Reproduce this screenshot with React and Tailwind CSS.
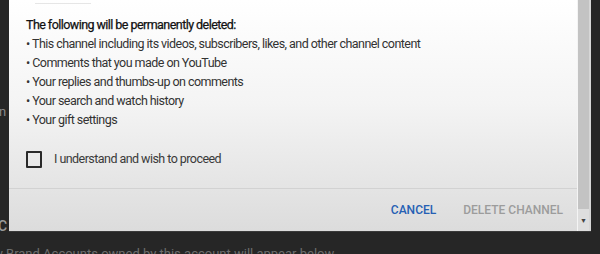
import React from 'react';

const ITEMS = [
  'This channel including its videos, subscribers, likes, and other channel content',
  'Comments that you made on YouTube',
  'Your replies and thumbs-up on comments',
  'Your search and watch history',
  'Your gift settings',
];

function Scrollbar() {
  return (
    <div className="w-[14px] flex flex-col border-l border-[#f4f4f4] border-r-2 border-r-[#d6d6d6] bg-[#dedede]">
      <div className="h-[209px] bg-[#c3c3c3]" />
      <div className="flex-1 flex items-center justify-center text-[7px] leading-none text-[#444] pt-[2px]">▼</div>
    </div>
  );
}

export default function App() {
  return (
    <div
      className="relative w-[600px] h-[254px] overflow-hidden bg-[#262626]"
      style={{ fontFamily: 'Roboto, "Liberation Sans", sans-serif' }}
    >
      {/* page behind the dialog, mostly hidden */}
      <div className="absolute left-[-8px] top-[102px] text-[13px] text-[#8a8a8a]">an</div>
      <div className="absolute left-[-6px] top-[216px] text-[14px] font-medium text-[#9a9a9a]">IC</div>
      <div className="absolute left-[-19px] top-[244px] text-[13px] text-[#6d6d6d] whitespace-nowrap">
        Any Brand Accounts owned by this account will appear below
      </div>

      {/* dialog */}
      <div className="absolute left-[9px] top-0 w-[582px] h-[232px] flex border-b border-[#3a3a3a] bg-gradient-to-b from-white via-[#f4f4f4] via-45% to-[#dcdcdc]">
        <div className="flex-1 flex flex-col">
          <div className="ml-[26px] mt-[3px] h-px w-[56px] bg-[#e6e6e6]" />
          <div className="pl-[17px] pt-[11px] text-[12.5px] leading-[19px] tracking-[-0.55px] text-[#333]">
            <div className="text-[#111] [-webkit-text-stroke:0.25px_#111]">The following will be permanently deleted:</div>
            {ITEMS.map((t) => (
              <div key={t}>• {t}</div>
            ))}
          </div>

          <label className="flex items-center gap-[12px] pl-[17px] mt-[21px]">
            <span className="w-[16px] h-[17px] border-2 border-[#2a2a2a] rounded-[1px]" />
            <span className="text-[12.5px] tracking-[-0.55px] text-[#3a3a3a]">I understand and wish to proceed</span>
          </label>

          <div className="mt-[19px] h-px bg-[#d2d2d2]" />

          <div className="flex-1 flex items-center justify-end gap-[27px] pr-[14px] pt-[1px] text-[12px] font-medium">
            <button className="text-[#2660b4]">CANCEL</button>
            <button className="text-[#9c9c9c]">DELETE CHANNEL</button>
          </div>
        </div>
        <Scrollbar />
      </div>
    </div>
  );
}
